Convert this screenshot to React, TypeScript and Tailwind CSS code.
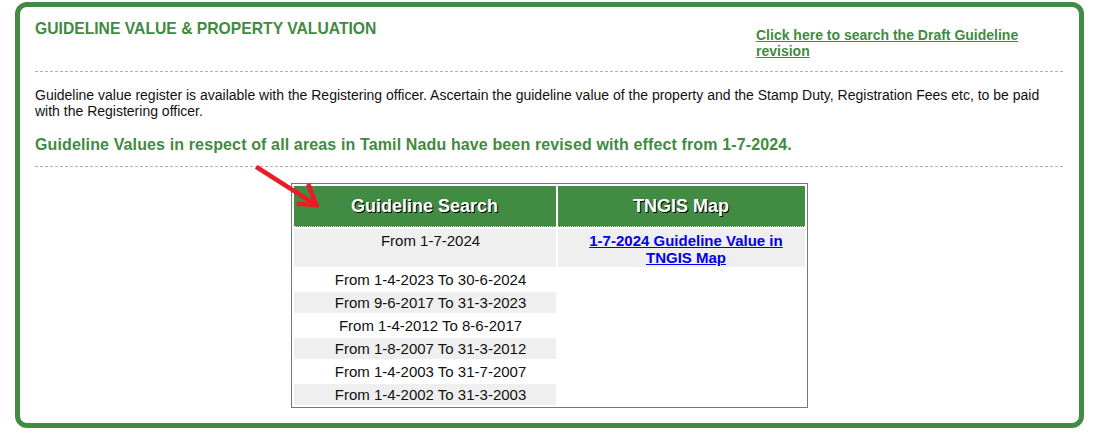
const periods = [
  "From 1-4-2023 To 30-6-2024",
  "From 9-6-2017 To 31-3-2023",
  "From 1-4-2012 To 8-6-2017",
  "From 1-8-2007 To 31-3-2012",
  "From 1-4-2003 To 31-7-2007",
  "From 1-4-2002 To 31-3-2003",
];

const Arrow = () => (
  <svg className="absolute left-[230px] top-[155px]" width="80" height="55" viewBox="0 0 80 55">
    <g stroke="#ec1c24" strokeWidth="4.5" strokeLinecap="square" fill="none">
      <line x1="8" y1="6" x2="66" y2="43" />
      <line x1="66" y1="43" x2="59" y2="24" />
      <line x1="66" y1="43" x2="49" y2="42" />
    </g>
  </svg>
);

export default function App() {
  return (
    <div className="bg-white w-[1111px] h-[440px] pt-[2px] pl-[15px]" style={{ fontFamily: "'Liberation Sans', Arial, sans-serif" }}>
      <div className="relative w-[1069px] h-[426px] border-[5px] border-[#428b43] rounded-[12px] pl-[15px] pr-[16px]">
        <Arrow />

        <div className="flex justify-between items-start">
          <h1 className="mt-[13px] text-[15.7px] leading-[18px] font-bold text-[#3f8b3f]">
            GUIDELINE VALUE &amp; PROPERTY VALUATION
          </h1>
          <a href="#" className="mt-[20px] w-[307px] text-[14px] leading-[16px] font-bold text-[#3f8b3f] underline">
            Click here to search the Draft Guideline revision
          </a>
        </div>

        <div className="mt-[12px] border-t border-dashed border-[#b0b0b0]" />

        <p className="mt-[15px] text-[14px] leading-[16px] text-[#111]">
          Guideline value register is available with the Registering officer. Ascertain the guideline value of the property and the Stamp Duty, Registration Fees etc, to be paid with the Registering officer.
        </p>

        <p className="mt-[16px] text-[16px] leading-[20px] font-bold tracking-[0.13px] text-[#3f8b3f]">
          Guideline Values in respect of all areas in Tamil Nadu have been revised with effect from 1-7-2024.
        </p>

        <div className="mt-[11px] border-t border-dashed border-[#b0b0b0]" />

        <div className="mt-[16px] flex justify-center">
          <table className="w-[517px] border-separate border-spacing-[2px] border border-[#777] text-[15px] leading-[17px] text-[#111]">
            <thead>
              <tr>
                <th className="w-[262px] h-[41px] bg-[#428b43] border-b border-dotted border-[#d8d8d8] text-[18px] font-bold text-white [text-shadow:1px_1px_0_#000]">
                  Guideline Search
                </th>
                <th className="h-[41px] bg-[#428b43] border-b border-dotted border-[#d8d8d8] text-[18px] font-bold text-white [text-shadow:1px_1px_0_#000]">
                  TNGIS Map
                </th>
              </tr>
            </thead>
            <tbody>
              <tr>
                <td className="bg-[#efefef] align-top text-center pl-[12px] pt-[3px] pb-[1px]">From 1-7-2024</td>
                <td className="bg-[#efefef] align-top text-center pl-[10px] pt-[3px] pb-[1px]">
                  <a href="#" className="font-bold text-[#0000ee] underline">
                    1-7-2024 Guideline Value in TNGIS Map
                  </a>
                </td>
              </tr>
              {periods.map((p, i) => (
                <tr key={p}>
                  <td className={`h-[21px] text-center pl-[12px] py-[2px] ${i % 2 === 1 ? "bg-[#efefef]" : "bg-white"}`}>{p}</td>
                  <td />
                </tr>
              ))}
            </tbody>
          </table>
        </div>
      </div>
    </div>
  );
}
